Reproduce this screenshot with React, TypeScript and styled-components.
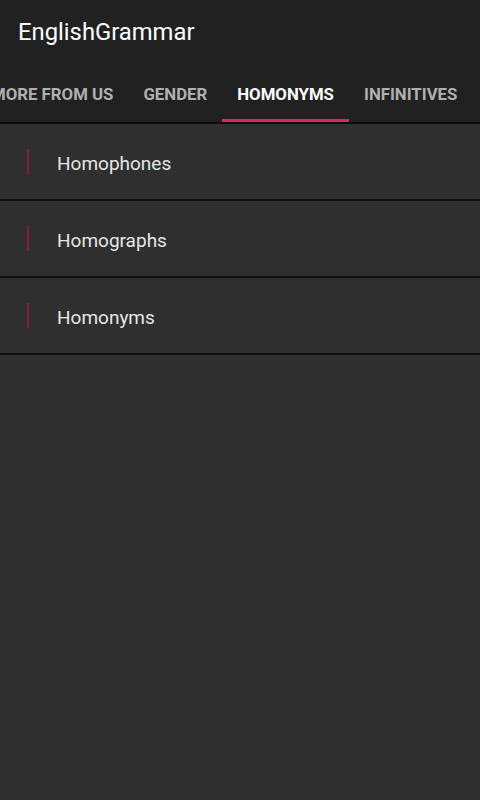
import { createGlobalStyle, styled } from 'styled-components'

const GlobalStyle = createGlobalStyle`
  html, body {
    margin: 0;
    padding: 0;
    background: #303030;
    font-family: Roboto, "Noto Sans", sans-serif;
  }
`

const tabs = ['MORE FROM US', 'GENDER', 'HOMONYMS', 'INFINITIVES']
const items = ['Homophones', 'Homographs', 'Homonyms']

function App() {
  return (
    <Screen>
      <GlobalStyle />
      <AppBar>
        <Title>EnglishGrammar</Title>
        <TabStrip>
          <TabRow>
            {tabs.map((t) => (
              <Tab key={t} $active={t === 'HOMONYMS'}>
                {t}
              </Tab>
            ))}
          </TabRow>
        </TabStrip>
      </AppBar>
      <List>
        {items.map((item) => (
          <Row key={item}>
            <Marker />
            <RowLabel>{item}</RowLabel>
          </Row>
        ))}
      </List>
    </Screen>
  )
}

const Screen = styled.div`
  min-height: 800px;
  background: #303030;
`

const AppBar = styled.header`
  background: #212121;
  border-bottom: 2px solid #0d0d0d;
`

const Title = styled.h1`
  margin: 0;
  height: 64px;
  display: flex;
  align-items: center;
  padding: 0 18px;
  font-size: 23.8px;
  font-weight: 400;
  color: #ffffff;
`

const TabStrip = styled.div`
  overflow: hidden;
  height: 58px;
`

const TabRow = styled.div`
  display: flex;
  height: 100%;
  margin-left: -24px;
`

const Tab = styled.div<{ $active?: boolean }>`
  flex: none;
  height: 100%;
  box-sizing: border-box;
  padding: 4px 15px 0;
  display: flex;
  align-items: center;
  font-size: 16.8px;
  font-weight: 700;
  color: ${({ $active }) => ($active ? '#ffffff' : '#b0b0b0')};
  border-bottom: 3px solid ${({ $active }) => ($active ? '#e0245e' : 'transparent')};
`

const List = styled.div`
  display: flex;
  flex-direction: column;
`

const Row = styled.div`
  height: 75px;
  display: flex;
  align-items: center;
  background: #2f2f2f;
  border-bottom: 2px solid #111111;
`

const Marker = styled.span`
  width: 2px;
  height: 25px;
  margin-left: 27px;
  background: #8a2040;
`

const RowLabel = styled.span`
  margin-left: 28px;
  padding-top: 3px;
  font-size: 19px;
  color: #e6e6e6;
`

export default App
